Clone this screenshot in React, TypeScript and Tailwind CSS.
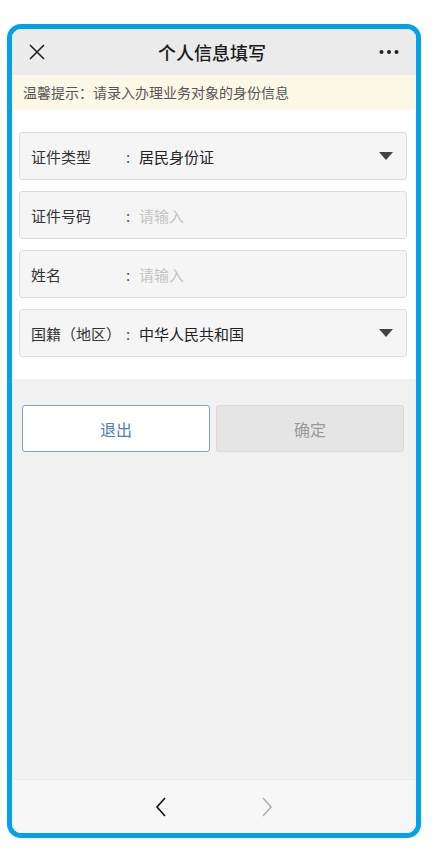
import React from 'react';

const font = { fontFamily: '"Noto Sans CJK SC", "Noto Sans", sans-serif' };

// 表单里的一行
const Field = ({ label, value, placeholder, select }: { label: string; value?: string; placeholder?: string; select?: boolean }) => (
  <div className="h-[48px] flex items-center border border-[#dcdcdc] rounded-[3px] bg-[#f5f5f5] pl-[11px] pr-[12px]">
    <div className="w-[95px] text-[15px] text-[#333] leading-none">{label}</div>
    <div className="w-[13px] text-[15px] text-[#555] leading-none">:</div>
    <div className={`flex-1 text-[15px] leading-none ${value ? 'text-[#222]' : 'text-[#c4c4c4]'}`}>{value || placeholder}</div>
    {select && (
      <svg width="14" height="9" viewBox="0 0 14 9" className="mr-[1px]">
        <path d="M0 0 L14 0 L7 8 Z" fill="#444" />
      </svg>
    )}
  </div>
);

export default function App() {
  return (
    <div className="w-[433px] h-[866px] bg-white pt-[24px] pl-[7px]" style={font}>
      <div className="w-[414px] h-[814px] border-[5px] border-[#02a2e6] rounded-[14px] overflow-hidden flex flex-col">
        {/* 顶栏 */}
        <div className="h-[46px] bg-[#ebebeb] flex items-center justify-between px-[17px] shrink-0">
          <svg width="16" height="16" viewBox="0 0 16 16">
            <path d="M1 1 L15 15 M15 1 L1 15" stroke="#222" strokeWidth="1.6" />
          </svg>
          <div className="text-[18px] font-medium text-[#1a1a1a]">个人信息填写</div>
          <svg width="20" height="6" viewBox="0 0 20 6">
            <circle cx="2.5" cy="3" r="2" fill="#222" />
            <circle cx="10" cy="3" r="2" fill="#222" />
            <circle cx="17.5" cy="3" r="2" fill="#222" />
          </svg>
        </div>

        {/* 提示 */}
        <div className="h-[35px] bg-[#fcf8e8] flex items-center pl-[11px] text-[14px] text-[#555] shrink-0">
          温馨提示：请录入办理业务对象的身份信息
        </div>

        {/* 表单 */}
        <div className="bg-white pt-[22px] pl-[7px] pr-[9px] h-[269px] flex flex-col gap-[11px] shrink-0">
          <Field label="证件类型" value="居民身份证" select />
          <Field label="证件号码" placeholder="请输入" />
          <Field label="姓名" placeholder="请输入" />
          <Field label="国籍（地区）" value="中华人民共和国" select />
        </div>

        {/* 按钮 */}
        <div className="flex-1 bg-[#f1f1f1] pt-[26px] pl-[10px] pr-[12px]">
          <div className="flex gap-[6px]">
            <button className="flex-1 h-[47px] bg-white border border-[#7da1cc] rounded-[3px] text-[16px] text-[#4f80b8]">退出</button>
            <button className="flex-1 h-[47px] bg-[#e5e5e5] border border-[#dadada] rounded-[3px] text-[16px] text-[#9a9a9a]">确定</button>
          </div>
        </div>

        {/* 底部导航 */}
        <div className="h-[54px] bg-[#f7f7f7] border-t border-[#ebebeb] flex items-center shrink-0">
          <div className="w-[143px]" />
          <svg width="12" height="20" viewBox="0 0 12 20">
            <path d="M10 1 L2 10 L10 19" stroke="#111" strokeWidth="1.6" fill="none" />
          </svg>
          <div className="w-[94px]" />
          <svg width="12" height="20" viewBox="0 0 12 20">
            <path d="M2 1 L10 10 L2 19" stroke="#b0b0b0" strokeWidth="1.6" fill="none" />
          </svg>
        </div>
      </div>
    </div>
  );
}
